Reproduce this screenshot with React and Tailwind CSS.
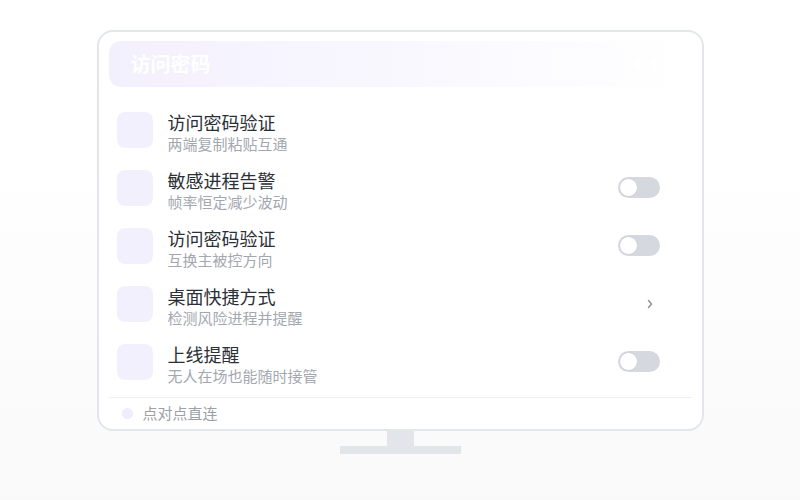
const rows = [
  { title: "访问密码验证", sub: "两端复制粘贴互通", action: "none" },
  { title: "敏感进程告警", sub: "帧率恒定减少波动", action: "toggle" },
  { title: "访问密码验证", sub: "互换主被控方向", action: "toggle" },
  { title: "桌面快捷方式", sub: "检测风险进程并提醒", action: "chevron" },
  { title: "上线提醒", sub: "无人在场也能随时接管", action: "toggle" },
];

function Toggle() {
  return (
    <div className="w-[42px] h-[21px] rounded-full bg-[#d5d8de] flex items-center p-px -mt-[2px]">
      <div className="w-[19px] h-[19px] rounded-full bg-white border border-[#cfd3d9]" />
    </div>
  );
}

function Chevron() {
  return (
    <svg width="8" height="10" viewBox="0 0 8 10" className="mr-[6px]">
      <path d="M2.5 1.5 L5.5 5 L2.5 8.5" fill="none" stroke="#8b9099" strokeWidth="1.4" strokeLinecap="round" strokeLinejoin="round" />
    </svg>
  );
}

export default function App() {
  return (
    <div
      className="w-[800px] h-[500px] flex flex-col items-center pt-[30px] bg-linear-to-b from-white from-30% to-[#f9f9fa]"
      style={{ fontFamily: '"Noto Sans CJK SC", "Noto Sans", sans-serif' }}
    >
      {/* monitor */}
      <div className="w-[607px] h-[401px] border-2 border-[#e3e6ea] rounded-2xl bg-white px-[10px] pt-[9px] flex flex-col">
        <div className="h-[46px] shrink-0 rounded-xl bg-linear-to-r from-[#f3f0fd] to-white flex items-center justify-between pl-[22px] pr-[18px]">
          <span className="text-[20px] font-semibold text-white leading-none">访问密码</span>
          <div className="flex gap-[8px]">
            <span className="w-[8px] h-[8px] rounded-full bg-white" />
            <span className="w-[8px] h-[8px] rounded-full bg-white" />
            <span className="w-[8px] h-[8px] rounded-full bg-white" />
          </div>
        </div>

        <div className="mt-[14px] flex flex-col">
          {rows.map((r, i) => (
            <div key={i} className="h-[58px] flex items-center pl-[8px] pr-[32px]">
              <div className="w-[36px] h-[36px] rounded-lg bg-[#f3f0fd] shrink-0" />
              <div className="ml-[15px] pt-[4px] flex-1 flex flex-col">
                <span className="text-[18px] leading-[24px] text-[#2b2f36]">{r.title}</span>
                <span className="text-[15px] leading-[20px] text-[#a3a8b0]">{r.sub}</span>
              </div>
              {r.action === "toggle" && <Toggle />}
              {r.action === "chevron" && <Chevron />}
            </div>
          ))}
        </div>

        <div className="mt-[6px] border-t border-[#eef0f3] flex-1 flex items-center pl-[13px]">
          <span className="w-[11px] h-[11px] rounded-full bg-[#efecfc]" />
          <span className="ml-[10px] text-[15px] text-[#9ca1a9]">点对点直连</span>
        </div>
      </div>

      {/* stand */}
      <div className="w-[27px] h-[15px] bg-[#e2e5e9]" />
      <div className="w-[121px] h-[8px] bg-[#e2e5e9]" />
    </div>
  );
}
